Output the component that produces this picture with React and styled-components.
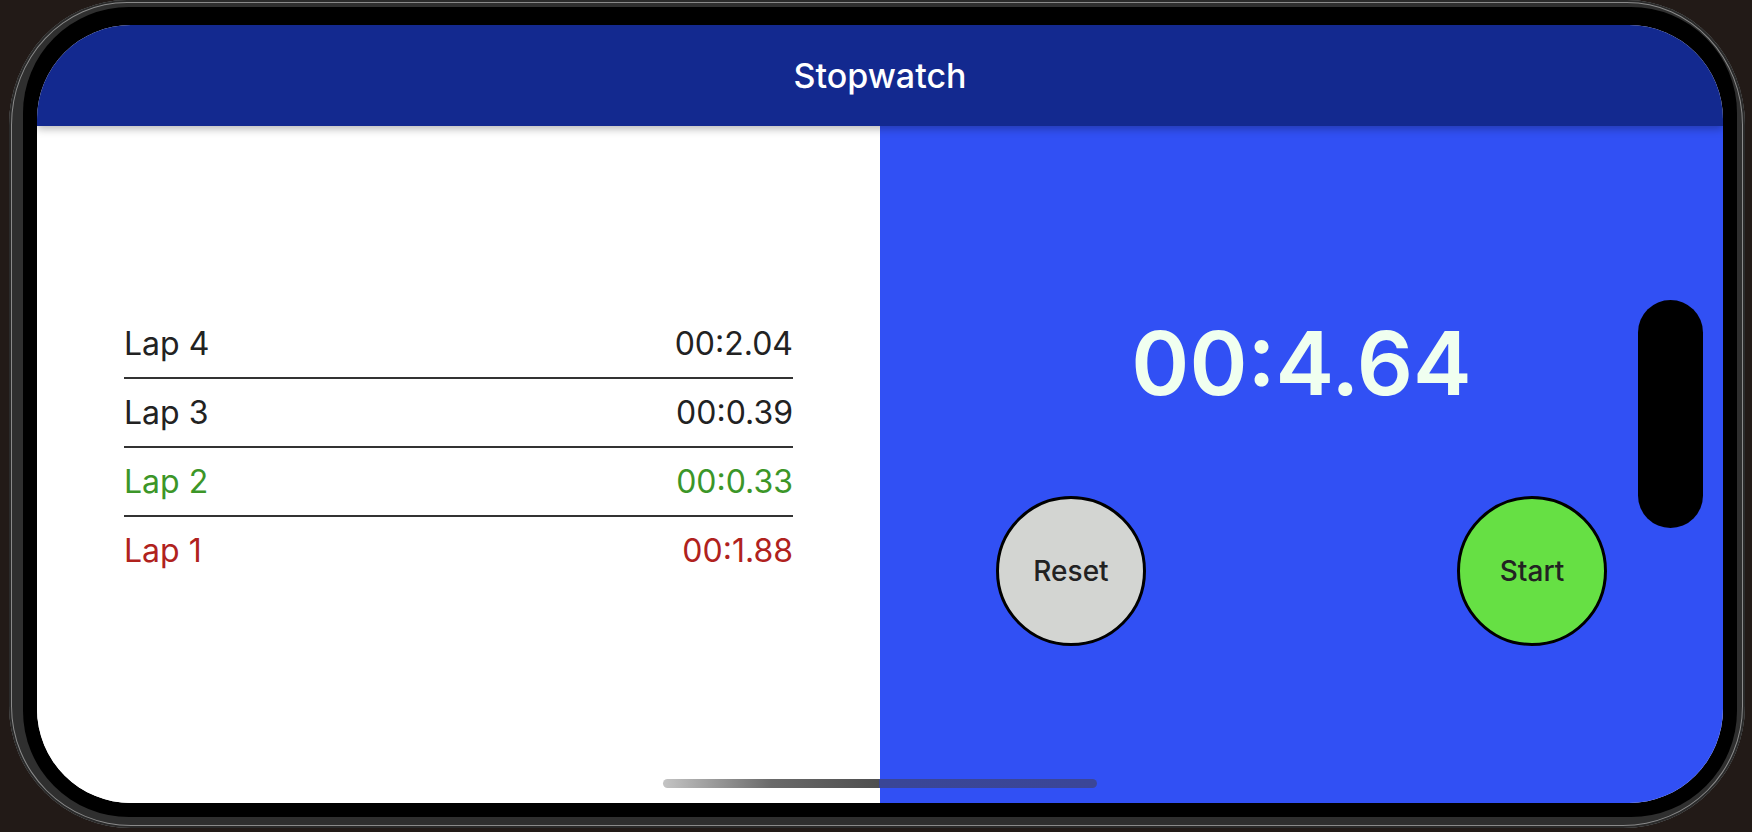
import React from 'react';
import styled, { createGlobalStyle } from 'styled-components';

const GlobalStyle = createGlobalStyle`
  html, body {
    margin: 0;
    padding: 0;
    background: #221a17;
    font-family: 'Inter', 'Noto Sans', sans-serif;
  }
  * { box-sizing: border-box; }
`;

const Stage = styled.div`
  height: 100vh;
  display: flex;
  padding: 0 7px 4px 9px;
`;

const Phone = styled.div`
  flex: 1;
  display: flex;
  padding: 7px 8px 11px 14px;
  background: #2f2f2f;
  border-radius: 122px;
  border-top-left-radius: 118px 125px;
  border-top-right-radius: 118px 125px;
  box-shadow: inset 0 0 0 2px #2a2a2a, inset 0 0 0 3px #8a8a8a;
`;

const Bezel = styled.div`
  flex: 1;
  display: flex;
  background: #000;
  border-radius: 106px;
  padding: 18px 14px 14px 14px;
`;

const Screen = styled.div`
  flex: 1;
  display: flex;
  flex-direction: column;
  border-radius: 94px;
  overflow: hidden;
  position: relative;
  background: #fff;
`;

const Header = styled.header`
  height: 101px;
  flex-shrink: 0;
  display: flex;
  align-items: center;
  justify-content: center;
  background: #13298f;
  color: #fff;
  font-size: 34px;
  font-weight: 500;
  position: relative;
  z-index: 2;
  box-shadow: 0 3px 8px rgba(0, 0, 0, 0.28);
`;

const Body = styled.div`
  flex: 1;
  display: flex;
`;

const LapPanel = styled.section`
  flex: 0 0 50%;
  background: #fff;
  display: flex;
  flex-direction: column;
  justify-content: center;
  padding: 0 87px 36px;
`;

const LapRow = styled.div`
  display: flex;
  justify-content: space-between;
  padding: 16px 0 15px;
  line-height: 36px;
  font-size: 32px;
  color: ${props => props.color || '#222'};
  border-bottom: 2px solid #333;

  &:last-child {
    border-bottom: none;
  }
`;

const TimerPanel = styled.section`
  flex: 0 0 50%;
  background: #3150f4;
  display: flex;
  flex-direction: column;
  padding: 182px 116px 0;
`;

const TimerText = styled.div`
  font-size: 88px;
  font-weight: 600;
  line-height: 110px;
  color: honeydew;
  text-align: center;
`;

const ButtonRow = styled.div`
  display: flex;
  justify-content: space-between;
  margin-top: 78px;
`;

const RoundButton = styled.button`
  width: 150px;
  height: 150px;
  border-radius: 50%;
  border: 3px solid #000;
  background: ${props => props.fill};
  color: #222;
  font-family: inherit;
  font-size: 28px;
  font-weight: 500;
  padding: 0;
`;

const Island = styled.div`
  position: absolute;
  right: 20px;
  top: 50%;
  transform: translateY(-50%);
  width: 65px;
  height: 228px;
  border-radius: 33px;
  background: #000;
  z-index: 3;
`;

const HomeIndicator = styled.div`
  position: absolute;
  bottom: 15px;
  left: 50%;
  transform: translateX(-50%);
  width: 434px;
  height: 9px;
  border-radius: 5px;
  background: linear-gradient(90deg, #c4c4c4 0%, #6a6a6a 25%, #4f4f4f 49.8%, #3a4696 49.8%, #3b4697 100%);
  z-index: 3;
`;

const laps = [
  { name: 'Lap 4', time: '00:2.04' },
  { name: 'Lap 3', time: '00:0.39' },
  { name: 'Lap 2', time: '00:0.33', color: '#3c9628' },
  { name: 'Lap 1', time: '00:1.88', color: '#b0221d' },
];

const App = () => {
  return (
    <>
      <GlobalStyle />
      <Stage>
        <Phone>
          <Bezel>
            <Screen>
              <Header>Stopwatch</Header>
              <Body>
                <LapPanel>
                  {laps.map(lap => (
                    <LapRow key={lap.name} color={lap.color}>
                      <span>{lap.name}</span>
                      <span>{lap.time}</span>
                    </LapRow>
                  ))}
                </LapPanel>
                <TimerPanel>
                  <TimerText>00:4.64</TimerText>
                  <ButtonRow>
                    <RoundButton fill="#d3d5d2">Reset</RoundButton>
                    <RoundButton fill="#66e044">Start</RoundButton>
                  </ButtonRow>
                </TimerPanel>
              </Body>
              <Island />
              <HomeIndicator />
            </Screen>
          </Bezel>
        </Phone>
      </Stage>
    </>
  );
};

export default App;
